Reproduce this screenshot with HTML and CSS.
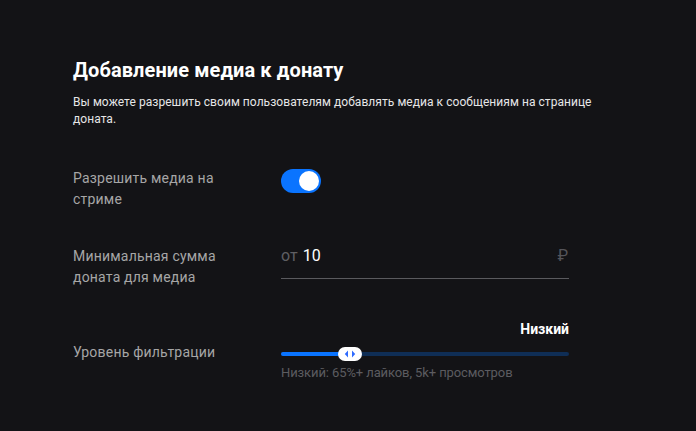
FILE: index.html
```html
<!DOCTYPE html>
<html lang="ru">
<head>
<meta charset="utf-8">
<link rel="stylesheet" href="styles.css">
</head>
<body>
<main class="panel">
  <h1 class="title">Добавление медиа к донату</h1>
  <p class="desc">Вы можете разрешить своим пользователям добавлять медиа к сообщениям на странице доната.</p>

  <div class="row row-toggle">
    <div class="label">Разрешить медиа на стриме</div>
    <div class="control">
      <span class="toggle"><span class="knob"></span></span>
    </div>
  </div>

  <div class="row row-input">
    <div class="label">Минимальная сумма доната для медиа</div>
    <div class="control">
      <div class="field">
        <span class="prefix">от</span>
        <span class="value">10</span>
        <span class="currency">₽</span>
      </div>
    </div>
  </div>

  <div class="row row-slider">
    <div class="label">Уровень фильтрации</div>
    <div class="control">
      <div class="level">Низкий</div>
      <div class="slider">
        <div class="fill" style="width: 24%"></div>
        <div class="thumb" style="left: 24%">
          <svg width="12" height="8" viewBox="0 0 12 8"><path d="M4 0.5 L0.8 4 L4 7.5 Z M8 0.5 L11.2 4 L8 7.5 Z" fill="#2f6bff"/></svg>
        </div>
      </div>
      <div class="hint">Низкий: 65%+ лайков, 5k+ просмотров</div>
    </div>
  </div>
</main>
</body>
</html>
```
FILE: styles.css
```css
html, body {
  margin: 0;
  padding: 0;
  background: #131316;
  height: 100%;
}
body {
  font-family: Roboto, "Noto Sans", sans-serif;
  color: #fff;
}
.panel {
  padding: 56px 92px 0 73px;
}
.title {
  margin: 0;
  font-size: 20px;
  line-height: 28px;
  font-weight: 700;
  letter-spacing: 0.1px;
  color: #fff;
}
.desc {
  margin: 10px 0 0;
  font-size: 12px;
  line-height: 17px;
  letter-spacing: 0.05px;
  color: #e6e6e6;
}
.row {
  display: grid;
  grid-template-columns: 208px 288px;
}
.label {
  font-size: 14px;
  line-height: 21px;
  letter-spacing: 0.2px;
  color: #a6a6a6;
  padding-right: 40px;
}
.row-toggle {
  margin-top: 40px;
}
.toggle {
  display: block;
  width: 40px;
  height: 24px;
  border-radius: 12px;
  background: #0a74ff;
  position: relative;
  margin-top: 1px;
}
.knob {
  position: absolute;
  right: 2px;
  top: 2px;
  width: 20px;
  height: 20px;
  border-radius: 50%;
  background: #fff;
}
.row-input {
  margin-top: 36px;
}
.field {
  display: flex;
  align-items: baseline;
  border-bottom: 1px solid #5a5a5e;
  height: 33px;
  box-sizing: border-box;
}
.prefix {
  font-size: 16px;
  color: #5f5f63;
  margin-right: 5px;
  line-height: 20px;
}
.value {
  font-size: 16px;
  color: #fff;
  line-height: 20px;
}
.currency {
  margin-left: auto;
  font-size: 16px;
  color: #55555a;
  margin-right: 1px;
  line-height: 20px;
}
.row-slider {
  margin-top: 32px;
  align-items: start;
}
.row-slider .label {
  margin-top: 22px;
}
.level {
  text-align: right;
  font-size: 14px;
  font-weight: 700;
  line-height: 18px;
  color: #fff;
}
.slider {
  position: relative;
  height: 4px;
  margin-top: 14px;
  border-radius: 2px;
  background: #0f2e56;
}
.fill {
  height: 100%;
  border-radius: 2px;
  background: #0a74ff;
}
.thumb {
  position: absolute;
  top: 50%;
  transform: translate(-50%, -50%);
  width: 24px;
  height: 14px;
  border-radius: 7px;
  background: #fff;
  display: flex;
  align-items: center;
  justify-content: center;
}
.thumb svg {
  display: block;
}
.hint {
  margin-top: 9px;
  font-size: 13px;
  line-height: 16px;
  letter-spacing: -0.1px;
  color: #5c5c60;
}
```
